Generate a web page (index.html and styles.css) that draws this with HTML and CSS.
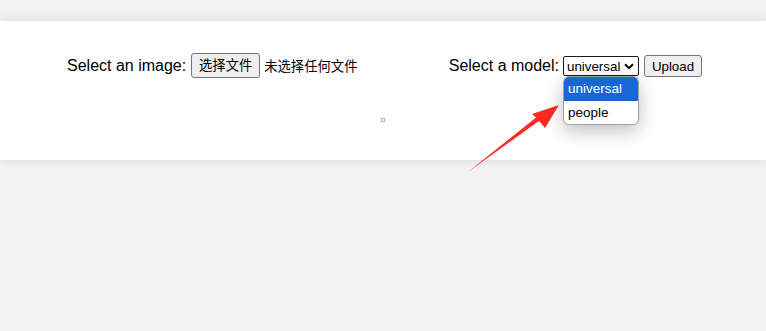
FILE: index.html
```html
<!DOCTYPE html>
<html lang="zh">
<head>
<meta charset="utf-8">
<title>Upload</title>
<link rel="stylesheet" href="styles.css">
</head>
<body>
<div class="card">
  <form class="row">
    <div class="group">
      <span class="label">Select an image:</span>
      <span class="btn file-btn">选择文件</span>
      <span class="file-name">未选择任何文件</span>
    </div>
    <div class="group">
      <span class="label">Select a model:</span>
      <span class="select-wrap">
        <span class="select">universal<svg class="chev" width="10" height="7" viewBox="0 0 10 7"><path d="M1 1.2 L5 5.2 L9 1.2" fill="none" stroke="#000" stroke-width="2"/></svg></span>
        <span class="dropdown">
          <span class="opt opt-active">universal</span>
          <span class="opt">people</span>
        </span>
      </span>
      <span class="btn upload-btn">Upload</span>
    </div>
  </form>
  <div class="result"><span class="dot"></span></div>
</div>
<svg class="arrow" width="766" height="331" viewBox="0 0 766 331">
  <polygon points="468,172 539,121 545,128 559,105 532,114 536,117.5" fill="#ff2a1f"/>
</svg>
</body>
</html>
```
FILE: styles.css
```css
html, body {
  margin: 0;
  padding: 0;
}
body {
  background: #f2f2f2;
  font-family: "Liberation Sans", Arial, "Noto Sans CJK SC", sans-serif;
  color: #000;
  padding-top: 21px;
  width: 766px;
  height: 331px;
  box-sizing: border-box;
  overflow: hidden;
  position: relative;
}
.card {
  background: #fff;
  height: 139px;
  box-shadow: 0 0 10px rgba(0, 0, 0, 0.1);
  box-sizing: border-box;
  padding-top: 32px;
}
.row {
  margin: 0;
  display: flex;
  justify-content: space-between;
  align-items: center;
  padding: 0 64px 0 67px;
  height: 25px;
}
.group {
  display: flex;
  align-items: center;
}
.label {
  font-size: 16px;
  line-height: 18px;
  margin-right: 5px;
}
.group + .group .label {
  margin-right: 4px;
}
.btn {
  font-size: 13.33px;
  background: #efefef;
  border: 1px solid #767676;
  border-radius: 3px;
  box-sizing: border-box;
  display: inline-flex;
  align-items: center;
  justify-content: center;
}
.file-btn {
  font-family: "Noto Sans CJK SC", sans-serif;
  width: 69px;
  height: 25px;
  line-height: 1;
  padding-bottom: 1px;
}
.file-name {
  font-family: "Noto Sans CJK SC", sans-serif;
  font-size: 13.33px;
  margin-left: 4px;
  padding-bottom: 1px;
}
.select-wrap {
  position: relative;
  display: inline-block;
  margin-top: 1px;
}
.select {
  display: flex;
  align-items: center;
  justify-content: space-between;
  width: 76px;
  height: 20px;
  box-sizing: border-box;
  border: 1px solid #1a1a1a;
  border-radius: 2px;
  font-size: 13.33px;
  padding: 0 4px 0 3px;
}
.chev {
  display: block;
}
.dropdown {
  position: absolute;
  left: 0;
  top: 20px;
  width: 76px;
  box-sizing: border-box;
  background: #fff;
  border: 1px solid #a0a0a0;
  border-radius: 6px;
  overflow: hidden;
  box-shadow: 0 6px 18px rgba(0, 0, 0, 0.25);
  display: flex;
  flex-direction: column;
}
.opt {
  font-size: 13.5px;
  height: 23.5px;
  line-height: 23px;
  padding-left: 4px;
}
.opt-active {
  background: #1967d2;
  color: #fff;
}
.upload-btn {
  width: 58px;
  height: 22px;
  margin-left: 5px;
  margin-top: 1px;
}
.result {
  text-align: center;
  margin-top: 39px;
  line-height: 0;
}
.dot {
  display: inline-block;
  width: 4px;
  height: 4px;
  box-sizing: border-box;
  border: 1px solid #b5b5b5;
}
.arrow {
  position: absolute;
  left: 0;
  top: 0;
  pointer-events: none;
}
```
